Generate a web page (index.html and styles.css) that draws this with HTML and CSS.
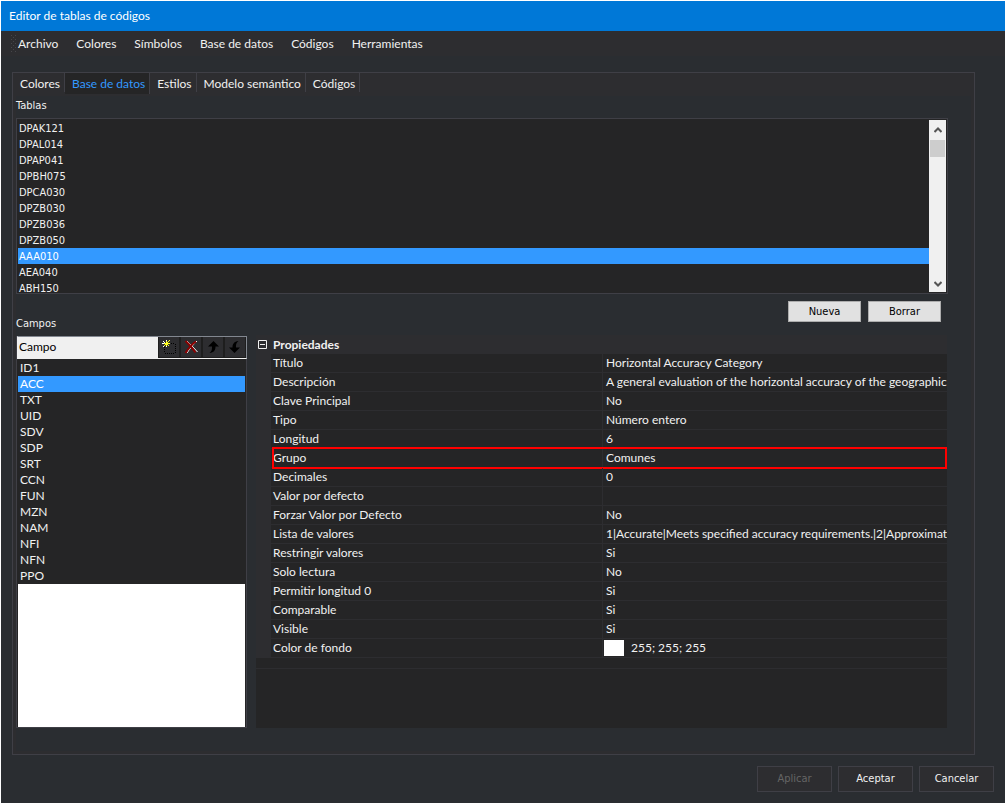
FILE: index.html
```html
<!DOCTYPE html>
<html lang="es">
<head>
<meta charset="utf-8">
<meta name="viewport" content="width=device-width, initial-scale=1">
<title>Editor de tablas de códigos</title>
<link rel="stylesheet" href="styles.css">
</head>
<body>
<div class="window">
  <header class="titlebar">Editor de tablas de códigos</header>
  <nav class="menubar">
    <svg class="grip" width="5" height="18" viewBox="0 0 5 18" aria-hidden="true"><path d="M0 .5h1M4 .5h1M2 2.5h1M0 4.5h1M4 4.5h1M2 6.5h1M0 8.5h1M4 8.5h1M2 10.5h1M0 12.5h1M4 12.5h1M2 14.5h1M0 16.5h1M4 16.5h1" stroke="#46464a"/></svg>
    <button type="button">Archivo</button>
    <button type="button">Colores</button>
    <button type="button">Símbolos</button>
    <button type="button">Base de datos</button>
    <button type="button">Códigos</button>
    <button type="button">Herramientas</button>
  </nav>

  <main class="panel">
    <div class="tabs" role="tablist">
      <button type="button" role="tab">Colores</button>
      <button type="button" role="tab" class="active" aria-selected="true">Base de datos</button>
      <button type="button" role="tab">Estilos</button>
      <button type="button" role="tab">Modelo semántico</button>
      <button type="button" role="tab">Códigos</button>
    </div>
    <div class="page">
      <h2 class="caption" id="tablas">Tablas</h2>
      <div class="listbox">
        <ul class="tables" role="listbox" aria-labelledby="tablas">
          <li role="option">DPAK121</li>
          <li role="option">DPAL014</li>
          <li role="option">DPAP041</li>
          <li role="option">DPBH075</li>
          <li role="option">DPCA030</li>
          <li role="option">DPZB030</li>
          <li role="option">DPZB036</li>
          <li role="option">DPZB050</li>
          <li role="option" class="selected" aria-selected="true">AAA010</li>
          <li role="option">AEA040</li>
          <li role="option">ABH150</li>
        </ul>
        <div class="scrollbar">
          <button type="button" aria-label="Subir"><svg width="8" height="6" viewBox="0 0 8 6"><path d="M.5 5 4 1.500 7.500 5" fill="none" stroke="#555" stroke-width="2"/></svg></button>
          <div class="thumb"></div>
          <button type="button" class="down" aria-label="Bajar"><svg width="8" height="6" viewBox="0 0 8 6"><path d="M.5 1 4 4.500 7.500 1" fill="none" stroke="#555" stroke-width="2"/></svg></button>
        </div>
      </div>
      <div class="table-actions">
        <button type="button">Nueva</button>
        <button type="button">Borrar</button>
      </div>

      <h2 class="caption" id="campos">Campos</h2>
      <div class="columns">
        <section class="fields">
          <div class="fields-head">
            <span class="fields-title">Campo</span>
            <button type="button" aria-label="Nuevo campo"><svg width="14" height="14" viewBox="0 0 14 14" shape-rendering="crispEdges"><path d="M7 3.500h1M9 3.500h1M11 3.500h1M13.500 4v1M13.500 6v1M13.500 8v1M13.500 10v1M13.500 12v1M2.500 7v1M2.500 9v1M2.500 11v1M3 13.500h1M5 13.500h1M7 13.500h1M9 13.500h1M11 13.500h1" stroke="#000"/><path d="M2 3h5v1H2zM4 1h1v5H4zM6 1h1v1H6zM5 2h1v1H5zM2 5h1v1H2zM3 4h1v1H3zM6 5h1v1H6zM5 4h1v1H5zM7 0h1v1H7zM7 3h1v1H7z" fill="#ffff20"/><path d="M1 1h1v1H1zM2 2h1v1H2zM4 0h1v1H4zM0 3h2v1H0zM1 6h1v1H1zM4 6h1v1H4z" fill="#fff"/></svg></button>
            <button type="button" aria-label="Eliminar campo"><svg width="14" height="14" viewBox="0 0 14 14"><path d="M3 1C6 4 10 8 13.500 12M13 1C10 4 6 8 3 13" fill="none" stroke="#fff" stroke-width="1"/><path d="M1.500 1C5 4 8.500 8.500 11.500 12.500M12 1.500C8 4 4 9 1.500 13" fill="none" stroke="#8b0000" stroke-width="2"/></svg></button>
            <button type="button" aria-label="Subir campo"><svg width="14" height="14" viewBox="0 0 14 14"><path d="M7.500 1 13 6.500H9.500C9.500 10 8 12.500 3.500 13 6 11 6 9.500 6 6.500H2z" fill="#000"/></svg></button>
            <button type="button" aria-label="Bajar campo"><svg width="14" height="14" viewBox="0 0 14 14"><path d="M6.500 13 1 7.500h3.500C4.500 4 6 1.500 10.500 1 8 3 8 4.500 8 7.500h4z" fill="#000"/></svg></button>
          </div>
          <ul class="field-list" role="listbox" aria-labelledby="campos">
            <li role="option">ID1</li>
            <li role="option" class="selected" aria-selected="true">ACC</li>
            <li role="option">TXT</li>
            <li role="option">UID</li>
            <li role="option">SDV</li>
            <li role="option">SDP</li>
            <li role="option">SRT</li>
            <li role="option">CCN</li>
            <li role="option">FUN</li>
            <li role="option">MZN</li>
            <li role="option">NAM</li>
            <li role="option">NFI</li>
            <li role="option">NFN</li>
            <li role="option">PPO</li>
          </ul>
        </section>

        <section class="properties">
          <div class="category">
            <button type="button" class="toggle" aria-label="Contraer Propiedades"><svg width="9" height="9" viewBox="0 0 9 9"><path d="M.5.5h8v8h-8zM2 4.500h5" fill="none" stroke="#f1f1f1"/></svg></button>
            <h3>Propiedades</h3>
          </div>
          <table>
            <colgroup><col class="name-col"><col></colgroup>
            <tbody>
              <tr><th scope="row">Título</th><td>Horizontal Accuracy Category</td></tr>
              <tr><th scope="row">Descripción</th><td>A general evaluation of the horizontal accuracy of the geographic</td></tr>
              <tr><th scope="row">Clave Principal</th><td>No</td></tr>
              <tr><th scope="row">Tipo</th><td>Número entero</td></tr>
              <tr><th scope="row">Longitud</th><td>6</td></tr>
              <tr class="marked"><th scope="row">Grupo</th><td>Comunes</td></tr>
              <tr><th scope="row">Decimales</th><td>0</td></tr>
              <tr><th scope="row">Valor por defecto</th><td></td></tr>
              <tr><th scope="row">Forzar Valor por Defecto</th><td>No</td></tr>
              <tr><th scope="row">Lista de valores</th><td>1|Accurate|Meets specified accuracy requirements.|2|Approximat</td></tr>
              <tr><th scope="row">Restringir valores</th><td>Si</td></tr>
              <tr><th scope="row">Solo lectura</th><td>No</td></tr>
              <tr><th scope="row">Permitir longitud 0</th><td>Si</td></tr>
              <tr><th scope="row">Comparable</th><td>Si</td></tr>
              <tr><th scope="row">Visible</th><td>Si</td></tr>
              <tr><th scope="row">Color de fondo</th><td class="color"><span class="swatch"></span>255; 255; 255</td></tr>
            </tbody>
          </table>
          <div class="divider"></div>
        </section>
      </div>
    </div>
  </main>

  <footer class="dialog-actions">
    <button type="button" disabled>Aplicar</button>
    <button type="button">Aceptar</button>
    <button type="button">Cancelar</button>
  </footer>
</div>
</body>
</html>
```
FILE: styles.css
```css
* { box-sizing: border-box; }

body {
  margin: 0;
  background: #fff;
  color: #f1f1f1;
  font: 12px/16px Lato, "Open Sans", sans-serif;
}

button {
  margin: 0;
  padding: 0;
  border: 0;
  background: none;
  color: inherit;
  font: inherit;
}

svg { display: block; }
ul { margin: 0; padding: 0; list-style: none; }

.window {
  display: flex;
  flex-direction: column;
  min-height: 100vh;
  border: 1px solid #fff;
  background: #2a2d31;
}

.titlebar {
  padding: 7px 8px;
  height: 30px;
  background: #0078d7;
  color: #fff;
}

.menubar {
  display: flex;
  align-items: center;
  gap: 18px;
  height: 25px;
  padding-left: 10px;
  background: #2d2d30;
}

.grip { margin-right: -16px; }

.panel {
  flex: 1;
  display: flex;
  flex-direction: column;
  margin: 16px 30px 0 11px;
  padding-bottom: 3px;
  border: 1px solid #3f3f46;
  background: #2d2d30;
}

.tabs { display: flex; height: 23px; }
.tabs button {
  padding: 0 4px 0 7px;
  border-right: 1px solid #3f3f46;
  height: 19px;
  line-height: 22px;
}
.tabs .active {
  height: 21px;
  background: #252526;
  color: #3399ff;
}

.page {
  flex: 1;
  display: flex;
  flex-direction: column;
  margin: 0 3px;
  padding: 2px 24px 23px 0;
  background: #2a2d31;
}

.caption {
  margin: 0;
  font: 11px/16px "DejaVu Sans Condensed", "DejaVu Sans", sans-serif;
}

.listbox {
  display: flex;
  height: 176px;
  margin-top: 4px;
  margin-right: -1px;
  border: 1px solid #3f3f46;
  padding: 1px;
  background: #252526;
}

.tables {
  flex: 1;
  overflow: hidden;
  font: 11px/16px "DejaVu Sans Condensed", "DejaVu Sans", sans-serif;
}
.tables li { height: 16px; padding-left: 1px; line-height: 17px; }
.selected { background: #3399ff; color: #fff; }

.scrollbar {
  display: flex;
  flex-direction: column;
  width: 17px;
  background: #f0f0f0;
}
.scrollbar button {
  display: grid;
  place-items: center;
  height: 20px;
}
.scrollbar .down { margin-top: auto; height: 17px; }
.thumb { height: 17px; margin: 0 1px; background: #cdcdcd; }

.table-actions {
  display: flex;
  justify-content: flex-end;
  gap: 7px;
  margin: 7px 6px 0 0;
}
.table-actions button {
  width: 73px;
  height: 21px;
  border: 1px solid #adadad;
  background: #e1e1e1;
  color: #000;
  font: 11px/16px "DejaVu Sans Condensed", "DejaVu Sans", sans-serif;
}
.table-actions + .caption { margin-top: -6px; }

.columns {
  flex: 1;
  display: flex;
  gap: 9px;
  margin-top: 4px;
}

.fields {
  display: flex;
  flex-direction: column;
  width: 231px;
  border: 1px solid #3f3f46;
  padding: 0 1px;
  background: #252526;
}
.fields-head {
  display: flex;
  height: 23px;
  margin: -1px -2px 0 -1px;
  border: 1px solid #828790;
  border-left-color: #f0f0f0;
  border-bottom-color: #f0f0f0;
  background: #1e1e1e;
}
.fields-title {
  flex: 1;
  padding-left: 1px;
  background: #f0f0f0;
  color: #000;
  line-height: 20px;
}
.fields-head button {
  display: grid;
  place-items: center;
  width: 20px;
  height: 20px;
  margin-left: 1px;
  margin-right: 1px;
  background: #2d2d30;
}
.field-list {
  flex: 1;
  margin-top: 1px;
  background: #fff;
}
.field-list li { padding-left: 2px; }
.field-list li:not(.selected) { background: #252526; }

.properties {
  flex: 1;
  min-width: 0;
  margin-top: -1px;
  background: #252526;
}
.category {
  display: flex;
  align-items: center;
  gap: 6px;
  height: 19px;
  padding-left: 2px;
  background: #2d2d30;
}
.category h3 { margin: 0; font-size: 12px; }

table {
  width: 100%;
  table-layout: fixed;
  border-collapse: separate;
  border-spacing: 0;
}
.name-col { width: 347px; }
tr { position: relative; }
th, td {
  height: 19px;
  padding: 0 0 1px 3px;
  border-bottom: 1px solid #2d2d30;
  overflow: hidden;
  text-align: left;
  font-weight: 400;
  line-height: 16px;
  white-space: nowrap;
}
th {
  padding-left: 2px;
  border-left: 15px solid #2d2d30;
  border-right: 1px solid #2d2d30;
}
.marked th::after {
  content: "";
  position: absolute;
  inset: -2px 0 -1px 16px;
  border: 2px solid #f00;
}
td.color { padding-left: 1px; }
.swatch {
  display: inline-block;
  width: 20px;
  height: 16px;
  margin-right: 7px;
  background: #fff;
  vertical-align: top;
}
.divider { height: 11px; border-bottom: 1px solid #2d2d30; }

.dialog-actions {
  display: flex;
  justify-content: flex-end;
  gap: 6px;
  padding: 11px;
}
.dialog-actions button {
  width: 75px;
  height: 26px;
  border: 1px solid #3f3f46;
  background: #2d2d30;
  font: 11px/16px "DejaVu Sans Condensed", "DejaVu Sans", sans-serif;
}
.dialog-actions button:disabled { color: #656565; }
```
